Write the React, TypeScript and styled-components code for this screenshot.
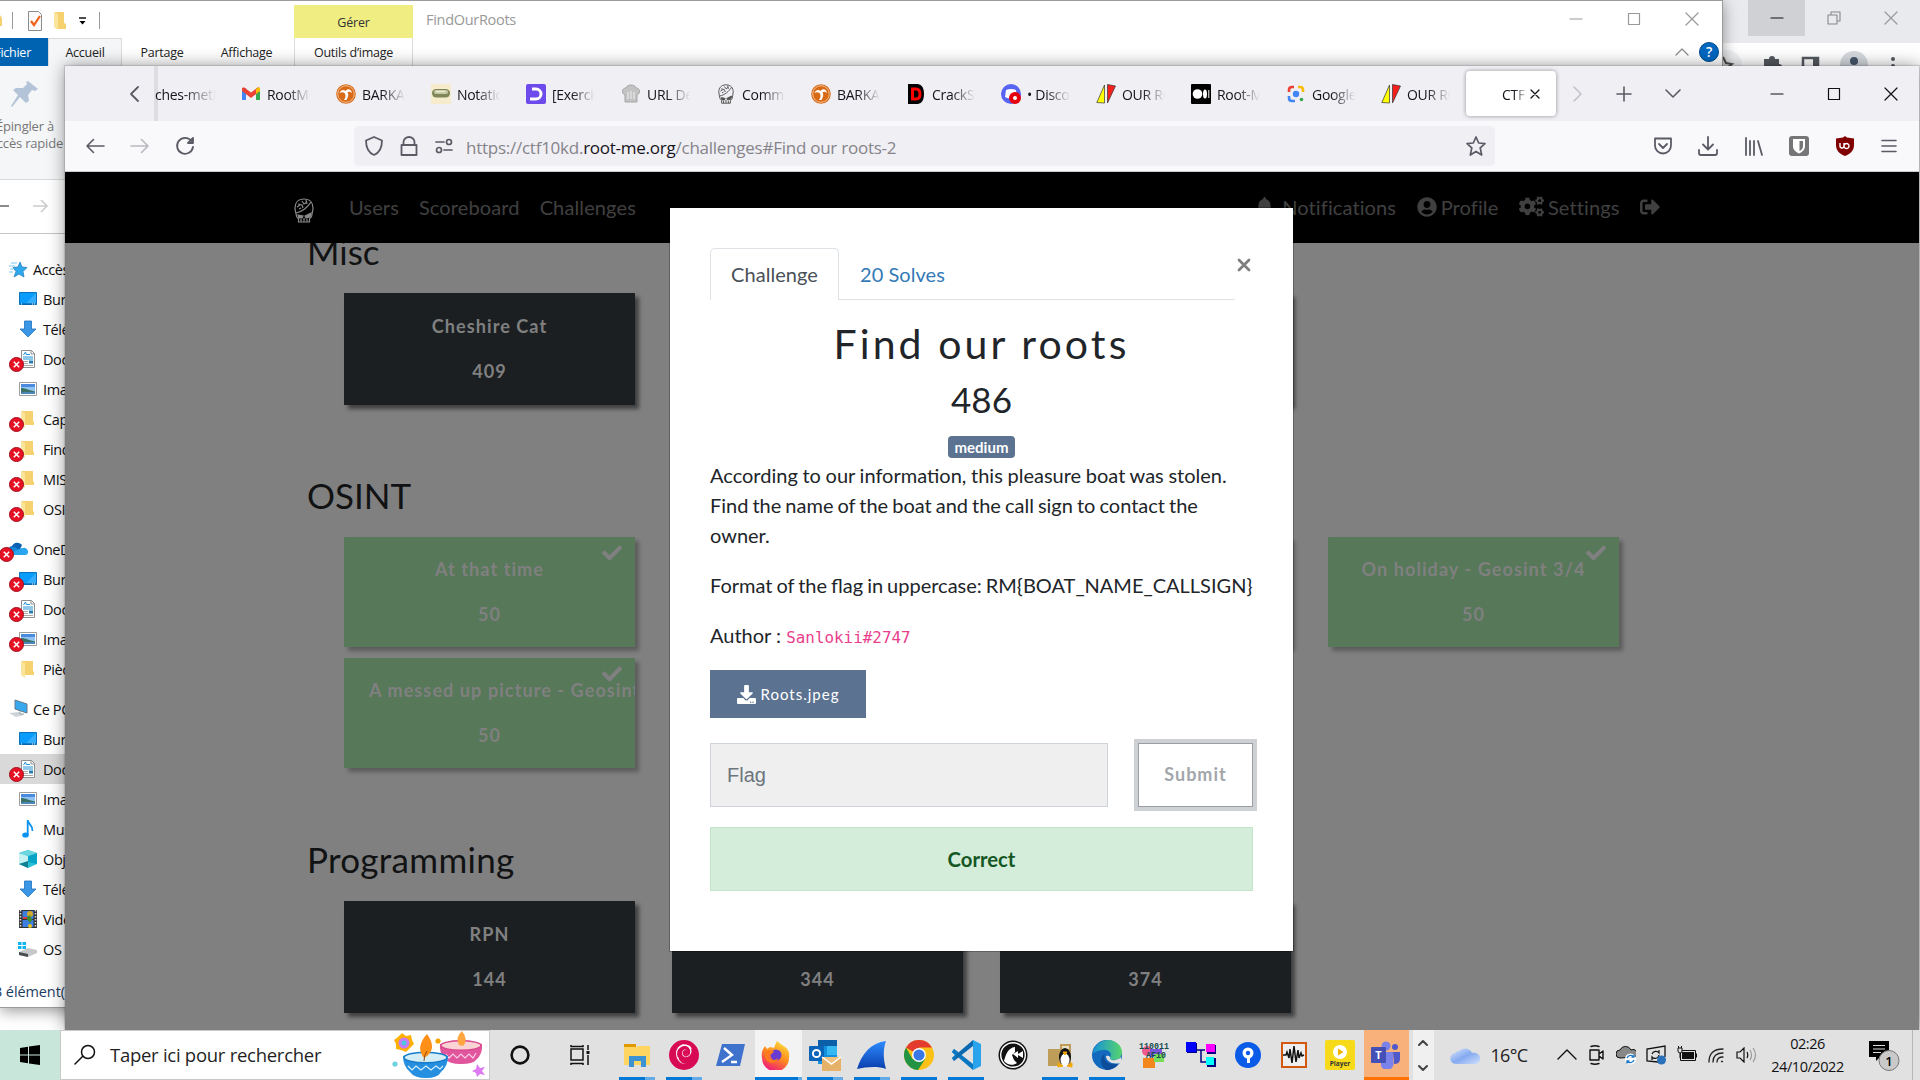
import React from "react";
import styled, { createGlobalStyle } from "styled-components";
import { FaBell, FaUserCircle, FaCogs, FaSignOutAlt, FaCheck, FaDownload } from "react-icons/fa";
import { SiDebian } from "react-icons/si";

const ui = `"Open Sans", "Noto Sans", sans-serif`;

const Global = createGlobalStyle`
  * { box-sizing: border-box; }
  body { margin: 0; overflow: hidden; background: #fff; }
  svg { display: block; flex: none; }
`;

const Desktop = styled.div`
  position: relative;
  width: 1920px;
  height: 1080px;
  overflow: hidden;
  background: #fff;
  font-family: ${ui};
  white-space: nowrap;
`;

/* ---------- browser window in the background ---------- */
const ChromeWindow = styled.div`
  position: absolute;
  inset: 0;
  background: #fff;
`;
const ChromeTitle = styled.div`
  height: 43px;
  background: #e8eaed;
  display: flex;
  justify-content: flex-end;
  align-items: flex-start;
  padding-right: 1px;
`;
const ChromeButton = styled.div<{ $active?: boolean }>`
  width: 57px;
  height: 36px;
  display: flex;
  align-items: center;
  justify-content: center;
  background: ${(p) => (p.$active ? "#d0d1d4" : "transparent")};
`;
const ChromeTools = styled.div`
  display: flex;
  justify-content: flex-end;
  align-items: center;
  gap: 19px;
  height: 40px;
  padding-right: 21px;
`;

/* ---------- file explorer ---------- */
const Explorer = styled.div`
  position: absolute;
  left: 0;
  top: 0;
  width: 1723px;
  height: 1008px;
  background: #fff;
  border: solid #9b9b9b;
  border-width: 1px 1px 1px 0;
  box-shadow: 0 3px 14px rgba(0, 0, 0, 0.4);
`;
const ExplorerTitle = styled.div`
  height: 37px;
  display: flex;
  align-items: flex-start;
`;
const QuickBar = styled.div`
  width: 294px;
  height: 30px;
  margin-top: 4px;
  display: flex;
  align-items: center;
`;
const ContextTab = styled.div`
  width: 119px;
  height: 33px;
  margin-top: 4px;
  padding-top: 2px;
  background: #f0ee82;
  display: flex;
  align-items: center;
  justify-content: center;
  font-size: 12.5px;
  letter-spacing: -0.2px;
  color: #333;
`;
const WindowName = styled.div`
  margin: 9px 0 0 13px;
  font-size: 14.5px;
  letter-spacing: -0.3px;
  color: #999;
  flex: 1;
`;
const ExplorerControls = styled.div`
  display: flex;
  gap: 44px;
  padding: 11px 23px 0 0;
`;
const RibbonTabs = styled.div`
  height: 28px;
  display: flex;
  font-size: 12.5px;
  letter-spacing: -0.25px;
  color: #222;
`;
const RibbonTab = styled.div<{ $w: number; $kind?: "file" | "open" | "tool" }>`
  width: ${(p) => p.$w}px;
  display: flex;
  align-items: center;
  justify-content: center;
  ${(p) => p.$kind === "file" && "background:#0063b1;color:#fff;justify-content:flex-end;padding-right:17px;"}
  ${(p) => p.$kind === "open" && "background:#f5f6f7;border:1px solid #dadbdc;border-bottom:0;"}
  ${(p) => p.$kind === "tool" && "border:solid #dadbdc;border-width:0 1px;margin-left:3px;"}
`;
const RibbonEnd = styled.div`
  flex: 1;
  display: flex;
  justify-content: flex-end;
  align-items: center;
  gap: 10px;
  padding-right: 3px;
`;
const Help = styled.div`
  width: 20px;
  height: 20px;
  border-radius: 50%;
  background: #0067c0;
  border: 1px solid #00488c;
  color: #fff;
  font-weight: 600;
  font-size: 14px;
  line-height: 18px;
  text-align: center;
`;
const Ribbon = styled.div`
  height: 114px;
  background: #f5f6f7;
  border-bottom: 1px solid #d8d9da;
  padding-top: 14px;
`;
const PinLabel = styled.div`
  width: 63px;
  display: flex;
  flex-direction: column;
  align-items: flex-end;
  font-size: 13px;
  letter-spacing: -0.2px;
  line-height: 17px;
  color: #777;
  padding-top: 10px;
  span:first-child { padding-right: 9px; }
`;
const AddressRow = styled.div`
  height: 54px;
  border-bottom: 1px solid #c4c4c4;
  display: flex;
  align-items: center;
`;
const Tree = styled.div`
  padding-top: 20px;
  display: flex;
  flex-direction: column;
  gap: 10px;
`;
const TreeRow = styled.div<{ $root?: boolean; $on?: boolean }>`
  height: 30px;
  display: flex;
  align-items: center;
  gap: 5px;
  padding-left: ${(p) => (p.$root ? 8 : 18)}px;
  background: ${(p) => (p.$on ? "#d9d9d9" : "transparent")};
  font-size: 14.5px;
  letter-spacing: -0.4px;
  color: #111;
  width: 100px;
`;
const TreeIcon = styled.div`
  position: relative;
  width: 20px;
  height: 20px;
`;
const ErrorDot = styled.svg`
  position: absolute;
  left: -9px;
  top: 8px;
`;
const Status = styled.div`
  margin-top: 18px;
  margin-left: -6px;
  font-size: 14.5px;
  letter-spacing: -0.1px;
  color: #1e3c5f;
`;

/* ---------- firefox ---------- */
const Firefox = styled.div`
  position: absolute;
  left: 65px;
  top: 66px;
  width: 1854px;
  height: 964px;
  background: #808080;
  box-shadow: 0 0 16px rgba(0, 0, 0, 0.42), 0 0 1px 1px rgba(0, 0, 0, 0.12);
  display: flex;
  flex-direction: column;
`;
const TabStrip = styled.div`
  height: 55px;
  background: #f0eff4;
  display: flex;
  align-items: center;
`;
const ScrollLeft = styled.div`
  width: 89px;
  padding-left: 60px;
`;
const CutTab = styled.div`
  width: 76px;
  height: 55px;
  display: flex;
  align-items: center;
  border-left: 4px solid #dedde2;
`;
const Tab = styled.div`
  width: 95px;
  display: flex;
  align-items: center;
  gap: 6px;
  padding-left: 11px;
`;
const Favicon = styled.div`
  width: 20px;
  display: flex;
  justify-content: center;
`;
const TabText = styled.div<{ $w?: number; $pull?: boolean }>`
  width: ${(p) => p.$w ?? 44}px;
  padding-top: 1px;
  overflow: hidden;
  font-size: 14px;
  letter-spacing: -0.3px;
  color: #15141a;
  margin-left: ${(p) => (p.$pull ? -3 : 0)}px;
  mask-image: linear-gradient(to right, #000 45%, transparent 98%);
`;
const ActiveTab = styled.div`
  width: 90px;
  height: 45px;
  margin-left: 1px;
  border-radius: 4px;
  background: #fff;
  box-shadow: 0 0 4px rgba(0, 0, 0, 0.4);
  display: flex;
  align-items: center;
  padding-left: 36px;
  gap: 2px;
`;
const StripTools = styled.div`
  flex: 1;
  display: flex;
  align-items: center;
  justify-content: space-between;
  padding: 0 21px 0 17px;
`;
const ToolGroup = styled.div<{ $gap: number }>`
  display: flex;
  align-items: center;
  gap: ${(p) => p.$gap}px;
`;
const ToolBar = styled.div`
  height: 51px;
  background: #f9f9fb;
  border-bottom: 1px solid #cccccf;
  display: flex;
  align-items: center;
  padding: 0 21px 0 20px;
`;
const UrlBar = styled.div`
  width: 1141px;
  height: 40px;
  margin-left: 159px;
  border-radius: 5px;
  background: #f0eff4;
  display: flex;
  align-items: center;
  padding: 0 9px 0 10px;
`;
const Url = styled.div`
  flex: 1;
  margin-left: 12px;
  padding-top: 2px;
  font-size: 17px;
  letter-spacing: -0.25px;
  color: #85848a;
  b { font-weight: 400; color: #15141a; }
`;
const RightTools = styled.div`
  flex: 1;
  display: flex;
  align-items: center;
  justify-content: flex-end;
  gap: 25.5px;
`;
const Page = styled.div`
  position: relative;
  flex: 1;
  overflow: hidden;
  font-family: Lato, sans-serif;
`;
const SiteNav = styled.div`
  height: 71px;
  background: #000;
  color: #404040;
  font-size: 20px;
  letter-spacing: 0.12px;
  display: flex;
  align-items: center;
  padding: 0 259px 2px 229px;
`;
const NavLinks = styled.div<{ $gap: number }>`
  display: flex;
  align-items: center;
  gap: ${(p) => p.$gap}px;
`;
const NavItem = styled.div<{ $gap?: number }>`
  display: flex;
  align-items: center;
  gap: ${(p) => p.$gap ?? 4}px;
`;
const LogoBox = styled.div`
  width: 35px;
  padding-top: 7px;
`;
const Spacer = styled.div`
  flex: 1;
`;
const Scroll = styled.div`
  height: 787px;
  overflow: hidden;
  padding-left: 242px;
  display: flex;
  flex-direction: column;
`;
const Section = styled.section<{ $top: number }>`
  flex: none;
  margin-top: ${(p) => p.$top}px;
`;
const SectionTitle = styled.h3<{ $ls?: number }>`
  margin: 0 0 21px;
  font-weight: 400;
  font-size: 35px;
  line-height: 42px;
  letter-spacing: ${(p) => p.$ls ?? 0}px;
  color: #111213;
`;
const CardGrid = styled.div`
  padding-left: 37px;
  display: grid;
  grid-template-columns: repeat(4, 291px);
  gap: 11px 37px;
`;
const Card = styled.div<{ $solved?: boolean }>`
  position: relative;
  height: ${(p) => (p.$solved ? 110 : 112)}px;
  background: ${(p) => (p.$solved ? "#577859" : "#1b1f22")};
  box-shadow: 4px 4px 4px rgba(0, 0, 0, ${(p) => (p.$solved ? 0.28 : 0.5)});
  color: #808080;
  font-weight: 700;
  font-size: 18.1px;
  letter-spacing: 1.05px;
  line-height: 45px;
  padding: ${(p) => (p.$solved ? 10 : 11)}px 25px 0;
  display: flex;
  flex-direction: column;
  align-items: center;
`;
const CardName = styled.div<{ $clip?: boolean }>`
  align-self: ${(p) => (p.$clip ? "flex-start" : "center")};
  width: ${(p) => (p.$clip ? "266px" : "auto")};
  overflow: ${(p) => (p.$clip ? "hidden" : "visible")};
`;
const Solved = styled.div`
  position: absolute;
  right: 13px;
  top: 6px;
  font-size: 20px;
`;

/* ---------- challenge dialog ---------- */
const Modal = styled.div`
  position: absolute;
  left: 605px;
  top: 36px;
  width: 623px;
  height: 743px;
  background: #fff;
  box-shadow: 0 0 0 1px rgba(0, 0, 0, 0.25);
  padding: 40px;
  color: #212529;
  font-size: 20px;
  line-height: 30px;
  display: flex;
  flex-direction: column;
`;
const ModalHead = styled.div`
  display: flex;
`;
const ModalTabs = styled.div`
  width: 525px;
  height: 52px;
  border-bottom: 1px solid #dee2e6;
  display: flex;
`;
const ModalTab = styled.div<{ $on?: boolean }>`
  height: 52px;
  padding: 10px 20px 0;
  border: 1px solid ${(p) => (p.$on ? "#dee2e6" : "transparent")};
  border-bottom: 0;
  border-radius: 5px 5px 0 0;
  background: ${(p) => (p.$on ? "#fff" : "transparent")};
  color: ${(p) => (p.$on ? "#495057" : "#337ab7")};
  letter-spacing: 0.06px;
`;
const Close = styled.div`
  padding: 10px 0 0 2px;
`;
const Title = styled.h2`
  margin: 19px 0 0;
  text-align: center;
  font-weight: 400;
  font-size: 41px;
  line-height: 50px;
  letter-spacing: 3.1px;
`;
const Score = styled.div`
  margin-top: 9px;
  text-align: center;
  font-size: 35px;
  line-height: 42px;
`;
const Badge = styled.div`
  align-self: center;
  margin-top: 16px;
  height: 22px;
  width: 67px;
  border-radius: 4px;
  background: #5b7290;
  color: #fff;
  font-weight: 700;
  font-size: 15px;
  line-height: 22px;
  text-align: center;
`;
const Description = styled.div`
  padding-top: 2px;
`;
const Para = styled.div`
  margin: 0 0 20px;
  code {
    font-family: "DejaVu Sans Mono", monospace;
    font-size: 15.9px;
    color: #e83e8c;
  }
`;
const Line = styled.div<{ $ws: number }>`
  word-spacing: ${(p) => p.$ws}px;
`;
const FileButton = styled.div`
  width: 156px;
  height: 48px;
  margin-top: -3px;
  background: #5b7290;
  color: #fff;
  font-size: 15px;
  letter-spacing: 1px;
  display: flex;
  align-items: center;
  justify-content: center;
  gap: 5px;
`;
const AnswerRow = styled.div`
  display: flex;
  justify-content: space-between;
  margin-top: 25px;
`;
const FlagInput = styled.div`
  width: 398px;
  height: 64px;
  background: #efefef;
  border: 1px solid #ced4da;
  padding-left: 16px;
  font: 20px/62px "Liberation Sans", Arial, sans-serif;
  color: #6c757d;
`;
const Submit = styled.div`
  width: 115px;
  height: 64px;
  border: 1px solid #9b9fa5;
  box-shadow: 0 0 0 4px #ced1d4;
  color: #a3a6aa;
  font-weight: 700;
  font-size: 18px;
  letter-spacing: 1px;
  line-height: 60px;
  text-align: center;
`;
const Alert = styled.div`
  margin-top: 20px;
  height: 64px;
  background: #d4edda;
  border: 1px solid #c3e6cb;
  color: #155724;
  font-weight: 700;
  font-size: 20.3px;
  line-height: 62px;
  text-align: center;
`;

/* ---------- taskbar ---------- */
const TaskBar = styled.div`
  position: absolute;
  left: 0;
  top: 1030px;
  width: 1920px;
  height: 50px;
  background: #e1e1e1;
  display: flex;
`;
const Start = styled.div`
  width: 60px;
  background: #c8e6da;
  display: flex;
  align-items: center;
  justify-content: center;
`;
const Search = styled.div`
  width: 430px;
  border: 1px solid #c9c9c9;
  background: #fff;
  display: flex;
  align-items: center;
  padding: 0 3px 0 13px;
  font-size: 18.5px;
  letter-spacing: -0.27px;
  color: #1f1f1f;
`;
const SearchText = styled.div`
  flex: 1;
  margin-left: 14px;
  padding-bottom: 1px;
`;
const Slot = styled.div<{ $w?: number; $bg?: string; $line?: string; $shift?: number }>`
  width: ${(p) => p.$w ?? 47}px;
  height: 50px;
  flex: none;
  display: flex;
  align-items: center;
  justify-content: center;
  padding-right: ${(p) => p.$shift ?? 0}px;
  background: ${(p) => (p.$line ? `${p.$line} bottom center no-repeat,` : "")} ${(p) => p.$bg ?? "transparent"};
  background-size: ${(p) => (p.$bg ? "100% 3px" : "36px 3px")};
`;
const Pager = styled.div`
  width: 21px;
  margin-left: 4px;
  background: #f0f0f0;
  display: flex;
  flex-direction: column;
  justify-content: space-around;
  align-items: center;
`;
const Weather = styled.div`
  display: flex;
  align-items: center;
  gap: 11px;
  margin-left: 16px;
  width: 107px;
  font-size: 18px;
  letter-spacing: -0.7px;
  color: #222;
`;
const Tray = styled.div`
  display: flex;
  align-items: center;
  gap: 10.5px;
  width: 200px;
`;
const Clock = styled.div`
  width: 102px;
  display: flex;
  flex-direction: column;
  align-items: center;
  padding-top: 2px;
  font-size: 14.5px;
  letter-spacing: -0.45px;
  line-height: 23px;
  color: #111;
`;
const Notice = styled.div`
  display: flex;
  align-items: center;
  width: 54px;
  padding: 0 0 0 10px;
  border-right: 1px solid #b5b5b5;
`;

const line = (c: string) => `linear-gradient(${c}, ${c})`;
const blue = line("#0078d7");
const stacked = "linear-gradient(to right, #0078d7 72%, #63abe6 72%)";

type S = { size?: number; color?: string };

const Stroke = ({ d, w = 20, h = 20, c = "#5b5b66", sw = 1.6, o = 1 }: { d: string; w?: number; h?: number; c?: string; sw?: number; o?: number }) => (
  <svg width={w} height={h} viewBox={`0 0 ${w} ${h}`} fill="none" stroke={c} strokeWidth={sw} strokeLinecap="round" strokeLinejoin="round" opacity={o}>
    <path d={d} />
  </svg>
);

const Min = ({ color = "#111" }: S) => <Stroke w={14} h={14} c={color} sw={1.2} d="M1 7H13" />;
const Max = ({ color = "#111" }: S) => <Stroke w={14} h={14} c={color} sw={1.2} d="M1.500 1.500h11v11h-11z" />;
const X = ({ color = "#111" }: S) => <Stroke w={14} h={14} c={color} sw={1.2} d="M1 1L13 13M13 1L1 13" />;

/* explorer tree icons */
const kinds: Record<string, React.ReactNode> = {
  star: (
    <svg width="20" height="20" viewBox="0 0 20 20">
      <path d="M12 3l2 5 5 .5-4 4 1 5.500-5-3-5 3 2-5.500-3-4 5-.5z" fill="#2fa8ee" stroke="#1674b8" strokeWidth=".7" />
      <path d="M3 4h6M1 7h6M2 10h3M1 13h4" stroke="#5db9ee" strokeWidth=".8" />
    </svg>
  ),
  desk: (
    <svg width="20" height="20" viewBox="0 0 20 20">
      <path d="M1.500 3.500h17v12h-17z" fill="#0a9cfc" stroke="#0873ba" />
      <path d="M18 4V14.500H8z" fill="#34aefd" />
      <path d="M2 15h16" stroke="#075a96" />
      <path d="M3 15h1M14 15h1M16 15h1" stroke="#fff" />
    </svg>
  ),
  down: (
    <svg width="20" height="20" viewBox="0 0 20 20">
      <path d="M6.500 2h7v8H18l-8 8-8-8h4.500z" fill="#3b97e6" stroke="#1f72c0" strokeWidth=".8" />
    </svg>
  ),
  doc: (
    <svg width="20" height="20" viewBox="0 0 20 20">
      <path d="M3.500 1.500h10l3 3v14h-13z" fill="#fff" stroke="#8d8f92" />
      <path d="M13 1.500v3.500h3.500" fill="none" stroke="#8d8f92" />
      <path d="M5.500 6l2-3 1 3M9 5.500h3M5 8h10M5 10h10" stroke="#2193d6" fill="none" />
      <path d="M5 12.500h5M5 14.500h5M5 16.500h10" stroke="#a9a9a9" />
      <path d="M11 11.500h4v3h-4z" fill="#2a7fae" />
    </svg>
  ),
  img: (
    <svg width="20" height="20" viewBox="0 0 20 20">
      <path d="M1.500 3.500h17v13h-17z" fill="#fff" stroke="#9a9c9e" />
      <path d="M3 5h14v10H3z" fill="#8ec4ef" />
      <path d="M3 5h14v3H3z" fill="#4a8be0" />
      <path d="M3 9c5 0 8 2.500 14 3.500V15H3z" fill="#3c6f66" />
      <path d="M3 13.500c5-1 9 0 14-.7V15H3z" fill="#4b87b9" />
    </svg>
  ),
  folder: (
    <svg width="20" height="20" viewBox="0 0 20 20">
      <path d="M4 2h11v10l1 1v3H5z" fill="#f5d170" />
      <path d="M3 2l4 2v15l-4-3z" fill="#fbe49b" />
    </svg>
  ),
  cloud: (
    <svg width="20" height="20" viewBox="0 0 20 20">
      <path d="M1 14a4.500 4.500 0 013-7 6 6 0 0110-1l-4 9z" fill="#0b62b5" />
      <path d="M2 15a4 4 0 013-7c4 0 7 4 9 8H4z" fill="#1387dc" />
      <path d="M5 16a3 3 0 012-4c3-1 5-3 8-3a4 4 0 015 4 3 3 0 01-3 3z" fill="#28a5ee" />
    </svg>
  ),
  pc: (
    <svg width="20" height="20" viewBox="0 0 20 20">
      <path d="M7 1l12 4v9L7 10z" fill="#38a8ee" stroke="#66798a" />
      <path d="M1 14l10-1 5 3-8 2z" fill="#cdd3d8" />
      <path d="M12 12v3h4" stroke="#9aa" fill="none" />
    </svg>
  ),
  music: (
    <svg width="20" height="20" viewBox="0 0 20 20">
      <ellipse cx="7.500" cy="16" rx="3.300" ry="2.600" fill="#0b93f0" />
      <path d="M9.700 1v15M10 2c1 4 5 4 4.500 10" stroke="#0b93f0" strokeWidth="1.800" fill="none" />
    </svg>
  ),
  cube: (
    <svg width="20" height="20" viewBox="0 0 20 20">
      <path d="M10 1l9 3v11l-9 4-9-4V4z" fill="#2cc0d4" />
      <path d="M1 4l9 3v6l-9 2z" fill="#c5f1f3" />
      <path d="M10 7l9-3v11l-9-2z" fill="#07a4c8" />
      <path d="M10 1l9 3-9 3-9-3z" fill="#69d6e0" />
      <path d="M1 15l9-3v7z" fill="#128093" />
    </svg>
  ),
  video: (
    <svg width="20" height="20" viewBox="0 0 20 20">
      <path d="M1 1h18v18H1z" fill="#333" />
      <path d="M4.500 2h11v8h-11zM4.500 11h11v7h-11z" fill="#3d7fe0" />
      <path d="M2.500 1v18M17.500 1v18" stroke="#ddd" strokeWidth="1.500" strokeDasharray="1.500 1.500" />
      <circle cx="12" cy="5" r="3" fill="#d3a92a" />
      <path d="M8 9l4-3 2 5-2 3z" fill="#3d8a2f" />
      <path d="M5 8h4v2H5z" fill="#d33b3b" />
      <circle cx="12" cy="17" r="2" fill="#e6c21c" />
    </svg>
  ),
  disk: (
    <svg width="20" height="20" viewBox="0 0 20 20">
      <path d="M0 3h3.500v3H0zM4.500 3H8v3H4.500zM0 7h3.500v3H0zM4.500 7H8v3H4.500z" fill="#0cb4f0" />
      <path d="M1 13l9-4 9 2v3l-9 4-9-2z" fill="#c6c8ca" />
      <path d="M1 13l9 2v3l-9-2z" fill="#4a4d50" />
    </svg>
  ),
};

type Row = [string, string, boolean?, boolean?];
const tree: Row[][] = [
  [["star", "Accès rapide"], ["desk", "Bureau"], ["down", "Téléchargements"], ["doc", "Documents", true], ["img", "Images"], ["folder", "Captures", true], ["folder", "FindOurRoots", true], ["folder", "MISC", true], ["folder", "OSINT", true]],
  [["cloud", "OneDrive", true], ["desk", "Bureau", true], ["doc", "Documents", true], ["img", "Images", true], ["folder", "Pièces jointes"]],
  [["pc", "Ce PC"], ["desk", "Bureau"], ["doc", "Documents", true, true], ["img", "Images"], ["music", "Musique"], ["cube", "Objets 3D"], ["down", "Téléchargements"], ["video", "Vidéos"], ["disk", "OS (C:)"]],
];

const Skull = ({ size = 20, color = "#555" }: S) => (
  <svg width={size} height={size * 1.25} viewBox="0 0 20 25" fill="none" stroke={color} strokeWidth="1.200">
    <path d="M10 1C4 1 1 5 1 10c0 3 1 5 1.500 8 .3 2 2 1.500 2 3V24h11v-3c0-1.500 2-1 2.200-3C18 15 19 13 19 10c0-5-3-9-9-9z" />
    <path d="M2 15C8 14 14 9 17 4M4 6l4 1 1 3M8 3l2 3 3-2M5 11l2-1M12 2l1 4M3 9l3-2" />
    <path d="M4 17l5 1-1 2H5zM11 18l6-3-1 4-4 1z" fill={color} />
    <path d="M7 21v3M10 20v4M13 21v3" />
  </svg>
);
const Palm = () => (
  <svg width="20" height="20" viewBox="0 0 20 20">
    <circle cx="10" cy="10" r="9.800" fill="#d96a16" />
    <circle cx="10" cy="10" r="8.300" fill="none" stroke="#f4c79d" strokeWidth=".9" />
    <path d="M3.500 9c1-3 4-4 6-2 2-3 6-2 6.500 2-2-1.500-3-1.500-4.500-.5 1.500 2 .5 5-1 7.500H8c2-3 2-5 .5-7C7 8 5.500 8 3.500 9z" fill="#fff" />
  </svg>
);
const Sails = () => (
  <svg width="20" height="20" viewBox="0 0 20 20" stroke="#333" strokeWidth=".7">
    <path d="M8.500 1v18L.8 18.500z" fill="#ff0" />
    <path d="M11.500.5l8 1.500-8 17z" fill="#f5201b" />
  </svg>
);

const tabs: [React.ReactNode, string][] = [
  [<svg width="20" height="20" viewBox="0 0 20 20"><path d="M1 4h4v12H1z" fill="#4285f4" /><path d="M15 4h4v12h-4z" fill="#34a853" /><path d="M1 4l2-.8 7 5.300 7-5.300L19 4v3l-9 7-9-7z" fill="#ea4335" /><path d="M15 5l2-1.800L19 4v3l-4 3z" fill="#fbbc04" /></svg>, "RootMe"],
  [<Palm />, "BARKAT"],
  [<svg width="20" height="20" viewBox="0 0 20 20"><path d="M0 0h20v20H0z" fill="#f6eccb" /><rect x="1" y="5" width="18" height="8.500" rx="4.200" fill="#7f8658" /><rect x="3" y="6" width="14" height="4" rx="2" fill="#c9cba5" /><path d="M5 7.500h9" stroke="#eef0da" /></svg>, "Notation"],
  [<svg width="20" height="20" viewBox="0 0 20 20"><rect width="20" height="20" rx="2" fill="#6d4aeb" /><path d="M6 5h4a5 5 0 010 10H4" stroke="#fff" strokeWidth="3" fill="none" /></svg>, "[Exercice"],
  [<svg width="20" height="20" viewBox="0 0 20 20"><path d="M4 18V11C0 9 1 4 5 4c1-4 9-4 10 0 4 0 5 5 1 7v7z" fill="#c3c3c3" stroke="#a5a5a5" /><path d="M7 8v7M10 7v8M13 8v7" stroke="#eee" /></svg>, "URL Dec"],
  [<Skull size={16} />, "Commen"],
  [<Palm />, "BARKAT"],
  [<svg width="20" height="20" viewBox="0 0 20 20"><path d="M2 0h10q6 1 6 10t-6 10H2z" fill="#000" /><path d="M6.500 5H10q4 0 4 5t-4 5H6.500z" fill="none" stroke="#f00" strokeWidth="3" /></svg>, "CrackSt"],
  [<svg width="20" height="20" viewBox="0 0 20 20"><circle cx="10" cy="10" r="10" fill="#5865f2" /><path d="M5 6q5-2 10 0l1 7q-6 3-12 0z" fill="#fff" /><circle cx="14" cy="14" r="6" fill="#e4000f" /><circle cx="14" cy="14" r="2" fill="#fff" /></svg>, "• Discord"],
  [<Sails />, "OUR RO"],
  [<svg width="20" height="20" viewBox="0 0 20 20"><rect width="20" height="20" rx="1" fill="#000" /><circle cx="6.500" cy="10" r="4.800" fill="#fff" /><ellipse cx="14" cy="10" rx="2" ry="4.500" fill="#fff" /><path d="M17.800 6v8" stroke="#fff" /></svg>, "Root-Me"],
  [<svg width="20" height="20" viewBox="0 0 20 20" fill="none" strokeWidth="2.600"><path d="M3 8V6q0-3 3-3h2" stroke="#ea4335" /><path d="M12 3h2q3 0 3 3v2" stroke="#fbbc04" /><path d="M3 12v2q0 3 3 3h3" stroke="#4285f4" /><circle cx="10" cy="10" r="3.200" fill="#4285f4" /><circle cx="15.500" cy="15.500" r="1.800" fill="#34a853" /></svg>, "Google"],
  [<Sails />, "OUR RO"],
];

const SolvedCard = ({ name, clip }: { name: string; clip?: boolean }) => (
  <Card $solved>
    <CardName $clip={clip}>{name}</CardName>
    <div>50</div>
    <Solved><FaCheck /></Solved>
  </Card>
);

const Diyas = () => (
  <svg width="94" height="48" viewBox="0 0 94 48">
    <path d="M6 6l4-4 4 3 5-1 1 5 2 4-4 4-4 4-5-2-5-1v-5l-2-4z" fill="#ffb000" />
    <circle cx="12" cy="12" r="5.500" fill="#c77bf2" /><circle cx="12" cy="12" r="2.500" fill="#4cc5dd" />
    <circle cx="46" cy="10" r="2.600" fill="#f7a400" />
    <circle cx="3" cy="33" r="2.600" fill="#6bd3e2" />
    <path d="M48 13q21-7 42 0 1 10-6 16-3 4-15 4-12 0-16-5-6-6-5-15z" fill="#e0559c" />
    <ellipse cx="69" cy="14.500" rx="20" ry="4.800" fill="#fbd3d4" stroke="#d9478f" strokeWidth="1.500" />
    <path d="M67 14q-4-8 3-14 7 9 1 15z" fill="#ffa640" />
    <path d="M54 23l3 4 4-4 4 4 4-4 4 4 4-4 4 4 3-5" stroke="#ffd0ea" fill="none" strokeWidth="1.200" />
    <path d="M11 25q22-7 45 0 0 10-7 16-3 6-15 6-12 0-16-6-7-6-7-16z" fill="#268fdf" />
    <ellipse cx="33.500" cy="26.500" rx="21.500" ry="5.200" fill="#d5eef5" stroke="#167dcc" strokeWidth="1.500" />
    <path d="M32 27q-9-11 3-24 10 14 0 22z" fill="#ff8f17" />
    <path d="M32 30q0-6 3-10" stroke="#8a4a10" fill="none" />
    <path d="M16 35l4 4 4-4 5 4 5-4 5 4 5-4 4 3 3-3" stroke="#d5f0ff" fill="none" strokeWidth="1.200" />
    <path d="M85 33l3 4 5-1-3 4 3 4-5-1-3 3-1-4-4-2 4-2z" fill="#de7bf2" />
  </svg>
);

const apps: { w?: number; bg?: string; l?: string; shift?: number; i: React.ReactNode }[] = [
  { l: stacked, i: <svg width="28" height="28" viewBox="0 0 28 28"><path d="M1 3h12v4H1z" fill="#e09a00" /><path d="M1 6h12l2-1h12v19H1z" fill="#ffd562" /><path d="M6 26V15h17v11h-5v-6h-7v6z" fill="#3d93d2" /></svg> },
  { l: stacked, i: <svg width="30" height="30" viewBox="0 0 30 30"><circle cx="15" cy="15" r="15" fill="#d70a53" /><g transform="translate(5 4)"><SiDebian size={20} color="#fff" /></g></svg> },
  { shift: 1, i: <svg width="29" height="24" viewBox="0 0 29 24"><path d="M6 1h23l-5 22H0z" fill="#3f72cd" /><path d="M8 5l8 7-10 7M15 19h6" stroke="#fff" strokeWidth="2.400" fill="none" /></svg> },
  { bg: "#f3f3f3", shift: 5, l: "linear-gradient(to right, #0078d7 91%, #63abe6 91%)", i: <svg width="30" height="30" viewBox="0 0 30 30"><defs><linearGradient id="ff" x1=".8" y1="0" x2=".3" y2="1"><stop offset="0" stopColor="#ffe03b" /><stop offset=".5" stopColor="#ff8a1f" /><stop offset="1" stopColor="#f0147e" /></linearGradient></defs><path d="M16 1c2 1 3 3 5 4 6 3 8 7 7 13a13.500 13.500 0 01-27 0C0 12 2 9 4 6l2 3 3-2c2 0 3 1 4 1 1-3 2-5 3-7z" fill="url(#ff)" /><circle cx="15" cy="15" r="5.500" fill="#6a3bd0" /><path d="M4 13c3-4 7-3 9-1-2 1-3 3-6 3 0 5 6 7 10 3-2 9-15 5-13-5z" fill="#ff7b1c" /></svg> },
  { l: stacked, i: <svg width="34" height="32" viewBox="0 0 34 32"><path d="M10 1h19v24H10z" fill="#1490df" /><path d="M10 1h19v6H10z" fill="#0a5fa8" /><path d="M19 7h10v9H19z" fill="#35b8f1" /><rect x="1" y="7" width="15" height="15" rx="1" fill="#0a64b8" /><circle cx="8.500" cy="14.500" r="3.600" fill="none" stroke="#fff" strokeWidth="2" /><path d="M14 18h19v14H14z" fill="#e6b269" /><path d="M14 18l9.500 7 9.500-7" stroke="#fff" strokeWidth="1.500" fill="#efc27f" /></svg> },
  { l: stacked, i: <svg width="30" height="28" viewBox="0 0 30 28"><defs><linearGradient id="ws" x2="0" y2="1"><stop stopColor="#2e8bff" /><stop offset="1" stopColor="#0b3fae" /></linearGradient></defs><path d="M0 28C5 12 14 2 29 0c-3 8-3 18 0 28-8-3-20-2-29 0z" fill="url(#ws)" /></svg> },
  { l: blue, i: <svg width="30" height="30" viewBox="0 0 30 30"><circle cx="15" cy="15" r="15" fill="#fbc116" /><path d="M15 15L2 7.500A15 15 0 0128 7.500H15z" fill="#e33b2e" /><path d="M2 7.500A15 15 0 0014 30l7.500-11.500L8.500 19z" fill="#229342" /><circle cx="15" cy="15" r="7" fill="#fff" /><circle cx="15" cy="15" r="5.600" fill="#3b78e7" /></svg> },
  { l: blue, i: <svg width="30" height="30" viewBox="0 0 30 30"><path d="M3 9L22 24V30L1 12z" fill="#0b77c2" /><path d="M3 21L22 6V0L1 18z" fill="#0a69b0" /><path d="M3 9l4 3-4 9-2-3 3-3-3-3z" fill="#0b77c2" /><path d="M22 0l8 4v22l-8 4z" fill="#29a3ec" /></svg> },
  { i: <svg width="30" height="30" viewBox="0 0 30 30"><circle cx="15" cy="15" r="14.500" fill="#111" /><circle cx="15" cy="15" r="12.300" fill="none" stroke="#fff" strokeWidth="1.400" /><path d="M6 21C8 14 10 8 17 7v5l-3 3 2 5 3 3c-4 3-10 2-13-2zM15 14l5-3v3l5-3v7l-5-3v3z" fill="#fff" /></svg> },
  { l: blue, i: <svg width="28" height="26" viewBox="0 0 28 26"><path d="M2 7h12V2h11v22H2z" fill="#bd9d58" /><path d="M16 4h7v3h-7z" fill="#e8e0c8" /><ellipse cx="19" cy="15" rx="6" ry="9" fill="#111" /><ellipse cx="19" cy="18" rx="4.500" ry="6.500" fill="#fff" /><path d="M17 10h4l-2 3zM12 21l5 3-5 1zM26 21l-5 3 5 1z" fill="#f5a800" stroke="#f5a800" /></svg> },
  { l: blue, i: <svg width="30" height="30" viewBox="0 0 30 30"><defs><linearGradient id="ed" x2="1"><stop stopColor="#1791d8" /><stop offset="1" stopColor="#58d56b" /></linearGradient></defs><circle cx="15" cy="15" r="15" fill="#1269bd" /><path d="M1 13C3 3 11 0 16 0c8 0 14 6 14 12 0 5-4 8-8 8-3 0-4-1-4-2 3-5-2-9-7-8-5 0-8 3-10 3z" fill="url(#ed)" /><path d="M13 14c-3 5 2 12 13 10-3 4-7 6-12 6-7-6-6-14-1-16z" fill="#0d4c99" /><path d="M18 18c0 3 7 3 11-1v5l-1 1c-8 2-14-2-14-7 2-1 5 1 4 2z" fill="#e1e1e1" /></svg> },
  { i: <svg width="30" height="28" viewBox="0 0 30 28"><circle cx="8" cy="10" r="5" fill="#f0588e" /><path d="M11 8h12v8H11z" fill="#7a53df" /><path d="M4 17h12v10H4z" fill="#f3861c" /><path d="M15 13h10v8H15z" fill="#76dd5a" /><text x="0" y="8" fontFamily="Liberation Mono" fontWeight="700" fontSize="8.300" fill="#164c4c">110011</text><text x="7" y="17" fontFamily="Liberation Mono" fontWeight="700" fontSize="8.300" fill="#164c4c">AF10</text></svg> },
  { i: <svg width="30" height="26" viewBox="0 0 30 26"><path d="M11 8h8M15 8v12h5" stroke="#000080" fill="none" strokeWidth="1.500" /><path d="M1 1h10v10H1zM21 3h9v9h-9zM21 16h9v9h-9z" fill="#000080" /><path d="M0 0h10v10H0z" fill="#00f" /><path d="M20 2h9v8h-9z" fill="#f0f" /><path d="M20 15h8v8h-8z" fill="#0ff" /></svg> },
  { i: <svg width="26" height="26" viewBox="0 0 26 26"><circle cx="13" cy="13" r="13" fill="#0a5be8" /><circle cx="13" cy="11" r="5.500" fill="#fff" /><circle cx="13" cy="11" r="2.200" fill="#0a5be8" /><path d="M12 15h3v6h-3z" fill="#fff" /></svg> },
  { w: 46, shift: 2, i: <svg width="26" height="26" viewBox="0 0 26 26"><path d="M1 1h24v24H1z" fill="#eee" stroke="#d4570f" strokeWidth="2" /><path d="M2 13h3l1-3 2 6 1-9 2 14 2-17 2 16 2-12 1 8 2-5 1 3 2-1" stroke="#111" strokeWidth="1.500" fill="none" /></svg> },
  { w: 46, shift: 2, i: <svg width="30" height="30" viewBox="0 0 30 30"><rect width="30" height="30" rx="2" fill="#f7da19" /><circle cx="15" cy="12" r="7" fill="#fff" /><path d="M13 8.500v7l5.500-3.500z" fill="#f0b400" /><text x="15" y="26" textAnchor="middle" fontFamily="Open Sans" fontWeight="700" fontSize="6.500" fill="#333">Player</text></svg> },
  { w: 45, bg: "#f9b17c", l: line("#ff7200"), i: <svg width="30" height="28" viewBox="0 0 30 28"><circle cx="15" cy="5" r="4.500" fill="#7b83eb" /><circle cx="24" cy="6" r="3" fill="#5059c9" /><path d="M10 11h12v9a6 6 0 01-12 5z" fill="#7b83eb" /><path d="M22 11h7v7q0 5-6 5z" fill="#5059c9" /><rect y="6" width="15" height="16" rx="1" fill="#4450b5" /><text x="7.500" y="18" textAnchor="middle" fontFamily="Open Sans" fontWeight="700" fontSize="11" fill="#fff">T</text></svg> },
];

export default function App() {
  return (
    <Desktop>
      <Global />
      <ChromeWindow>
        <ChromeTitle>
          <ChromeButton $active><Min /></ChromeButton>
          <ChromeButton><Stroke w={14} h={14} c="#888" sw={1.1} d="M1 4h9v9H1zM4 4V1h9v9h-3" /></ChromeButton>
          <ChromeButton><X color="#999" /></ChromeButton>
        </ChromeTitle>
        <ChromeTools>
          <svg width="32" height="32" viewBox="0 0 32 32"><circle cx="16" cy="18" r="15" fill="#f1f3f4" /><path d="M12 10l3 6 6 1-5 4" fill="none" stroke="#555" strokeWidth="2" /></svg>
          <svg width="20" height="20" viewBox="0 0 20 20"><path d="M2 6h5a3 3 0 016 0h4v5a3 3 0 010 6v3H2z" fill="#555a60" /></svg>
          <svg width="20" height="20" viewBox="0 0 20 20"><path d="M2 5h15v14H2z" fill="none" stroke="#555a60" strokeWidth="2.500" /><path d="M12 4h6v16h-6z" fill="#555a60" /></svg>
          <svg width="28" height="28" viewBox="0 0 28 28"><circle cx="14" cy="16" r="14" fill="#d5d9de" /><circle cx="14" cy="12" r="4" fill="#46566a" /></svg>
          <svg width="12" height="20" viewBox="0 0 12 20" fill="#555a60"><circle cx="6" cy="6" r="2" /><circle cx="6" cy="13" r="2" /></svg>
        </ChromeTools>
      </ChromeWindow>

      <Explorer>
        <ExplorerTitle>
          <QuickBar>
            <svg width="110" height="24" viewBox="0 0 110 24">
              <path d="M0 7l2 3v8H0z" fill="#f5d170" />
              <path d="M12.500 4v17M99.500 4v17" stroke="#999" />
              <path d="M28.500 3.500h10l3 3v16h-13z" fill="#fafafa" stroke="#8c8c8c" />
              <path d="M31 13l3 4 6-9" stroke="#f0601a" strokeWidth="2.200" fill="none" />
              <path d="M55 4h9v11l2 1v5H56z" fill="#f5d170" /><path d="M54 4l4 2v16l-4-3z" fill="#fbe49b" />
              <path d="M79 10h7" stroke="#000" strokeWidth="1.400" /><path d="M79.500 13h6l-3 3.500z" fill="#000" />
            </svg>
          </QuickBar>
          <ContextTab>Gérer</ContextTab>
          <WindowName>FindOurRoots</WindowName>
          <ExplorerControls><Min color="#999" /><Max color="#999" /><X color="#999" /></ExplorerControls>
        </ExplorerTitle>
        <RibbonTabs>
          <RibbonTab $w={48} $kind="file">Fichier</RibbonTab>
          <RibbonTab $w={74} $kind="open">Accueil</RibbonTab>
          <RibbonTab $w={80}>Partage</RibbonTab>
          <RibbonTab $w={89}>Affichage</RibbonTab>
          <RibbonTab $w={119} $kind="tool">Outils d’image</RibbonTab>
          <RibbonEnd>
            <Stroke w={14} h={10} c="#888" sw={1.2} d="M1 8l6-6 6 6" />
            <Help>?</Help>
          </RibbonEnd>
        </RibbonTabs>
        <Ribbon>
          <svg width="40" height="28" viewBox="0 0 40 28"><path d="M28 1l10 8-3 2-3-1-4 5 1 6-3 2-6-6-8 10-1-1 7-11-5-5 3-2 7 0 4-4-1-2z" fill="#b4c4d8" /></svg>
          <PinLabel><span>Épingler à</span><span>l’Accès rapide</span></PinLabel>
        </Ribbon>
        <AddressRow>
          <svg width="60" height="14" viewBox="0 0 60 14" fill="none" strokeWidth="1.600"><path d="M-6 6H9M-1 0l-6 6 6 6" stroke="#666" /><path d="M33 6h14M41 0l6 6-6 6" stroke="#ccc" /></svg>
        </AddressRow>
        <Tree>
          {tree.map((group, g) => (
            <div key={g}>
              {group.map(([icon, label, err, on], i) => (
                <TreeRow key={i} $root={i === 0} $on={on}>
                  <TreeIcon>
                    {kinds[icon]}
                    {err && (
                      <ErrorDot width="15" height="15" viewBox="0 0 15 15">
                        <circle cx="7.500" cy="7.500" r="7" fill="#e81123" stroke="#a30d1c" />
                        <path d="M4.800 4.800l5.400 5.400M10.200 4.800l-5.400 5.400" stroke="#fff" strokeWidth="1.500" />
                      </ErrorDot>
                    )}
                  </TreeIcon>
                  {label}
                </TreeRow>
              ))}
            </div>
          ))}
        </Tree>
        <Status>3 élément(s)</Status>
      </Explorer>

      <Firefox>
        <TabStrip>
          <ScrollLeft><Stroke w={20} d="M13 3L6 10l7 7" sw={1.8} /></ScrollLeft>
          <CutTab><TabText $w={62} $pull>ches-meth</TabText></CutTab>
          {tabs.map(([icon, text], i) => (
            <Tab key={i}>
              <Favicon>{icon}</Favicon>
              <TabText>{text}</TabText>
            </Tab>
          ))}
          <ActiveTab>
            <TabText $w={26}>CTF1</TabText>
            <Stroke w={10} h={10} c="#15141a" sw={1.3} d="M1 1l8 8M9 1L1 9" />
          </ActiveTab>
          <StripTools>
            <ToolGroup $gap={33}>
              <Stroke w={10} h={20} d="M1 3l7 7-7 7" o={0.3} />
              <Stroke w={16} h={16} d="M8 1v14M1 8h14" />
              <Stroke w={16} h={16} d="M1 4l7 7 7-7" />
            </ToolGroup>
            <ToolGroup $gap={43}><Min /><Max /><X /></ToolGroup>
          </StripTools>
        </TabStrip>
        <ToolBar>
          <ToolGroup $gap={25}>
            <Stroke d="M19 10H2M8.500 3.500L2 10l6.500 6.500" />
            <Stroke d="M1 10h17M11.500 3.500L18 10l-6.500 6.500" o={0.4} />
            <Stroke d="M16.500 5A8 8 0 1018 11M18 2v5h-5z" sw={1.8} />
          </ToolGroup>
          <UrlBar>
            <ToolGroup $gap={15}>
              <Stroke d="M10 1l8 3.500C18 12 15 17 10 19 5 17 2 12 2 4.500z" sw={1.8} />
              <Stroke d="M4.500 9V6a5.500 5 0 0111 0v3M2.500 9h15v10h-15z" sw={1.8} />
              <Stroke d="M2 6h8M10 14h8M12.500 6a2.500 2.500 0 105 0 2.500 2.500 0 10-5 0M2.500 14a2.500 2.500 0 105 0 2.500 2.500 0 10-5 0" sw={1.7} />
            </ToolGroup>
            <Url>https://ctf10kd.<b>root-me.org</b>/challenges#Find our roots-2</Url>
            <Stroke d="M10 1l2.700 6 6.300.6-4.800 4.300L15.700 19 10 15.500 4.300 19l1.500-7.100L1 7.600 7.300 7z" sw={1.7} />
          </UrlBar>
          <RightTools>
            <Stroke d="M2 2.500h16v7a8 8 0 01-16 0zM6 8l4 4 4-4" sw={1.8} />
            <Stroke d="M10 1v12M5 8.500l5 5 5-5M1 14v3q0 2 2 2h14q2 0 2-2v-3" sw={1.8} />
            <Stroke d="M2 2v17M6 5v14M10 5v14M14 5l4 14" sw={1.8} />
            <svg width="20" height="20" viewBox="0 0 20 20"><rect width="20" height="20" rx="3" fill="#767676" /><path d="M4 3h12v7c0 4-3 6-6 7.500C7 16 4 14 4 10z" fill="#fff" /><path d="M10.500 5H14v5c0 2.500-1.500 4-3.500 5z" fill="#767676" /></svg>
            <svg width="20" height="20" viewBox="0 0 20 20"><path d="M10 0l2 1.500 7 1V9c0 6-4 9-9 11C5 18 1 15 1 9V2.500l7-1z" fill="#800000" /><path d="M5 7v3q0 2 2 2t2-2V7m0 3a2.500 2.500 0 105 0 2.500 2.500 0 10-5 0" stroke="#fff" strokeWidth="1.400" fill="none" /></svg>
            <Stroke w={18} d="M2 4.500h14M2 10h14M2 15.500h14" />
          </RightTools>
        </ToolBar>
        <Page>
          <SiteNav>
            <NavLinks $gap={20}>
              <LogoBox><Skull size={20} color="#8a8a8a" /></LogoBox>
              <span>Users</span><span>Scoreboard</span><span>Challenges</span>
            </NavLinks>
            <Spacer />
            <NavLinks $gap={20.5}>
              <NavItem $gap={8}><FaBell size={19} />Notifications</NavItem>
              <NavItem><FaUserCircle size={20} />Profile</NavItem>
              <NavItem><FaCogs size={25} />Settings</NavItem>
              <FaSignOutAlt size={20} />
            </NavLinks>
          </SiteNav>
          <Scroll>
            <Section $top={-13}>
              <SectionTitle>Misc</SectionTitle>
              <CardGrid>
                <Card><CardName>Cheshire Cat</CardName><div>409</div></Card>
                <Card /><Card />
              </CardGrid>
            </Section>
            <Section $top={69}>
              <SectionTitle>OSINT</SectionTitle>
              <CardGrid>
                <SolvedCard name="At that time" />
                <Card $solved />
                <Card $solved />
                <SolvedCard name="On holiday - Geosint 3/4" />
                <SolvedCard clip name="A messed up picture - Geosint 4/4" />
              </CardGrid>
            </Section>
            <Section $top={70}>
              <SectionTitle $ls={0.3}>Programming</SectionTitle>
              <CardGrid>
                {[["RPN", "144"], ["\u00a0", "344"], ["\u00a0", "374"]].map(([n, s]) => (
                  <Card key={s}><CardName>{n}</CardName><div>{s}</div></Card>
                ))}
              </CardGrid>
            </Section>
          </Scroll>
          <Modal>
            <ModalHead>
              <ModalTabs><ModalTab $on>Challenge</ModalTab><ModalTab>20 Solves</ModalTab></ModalTabs>
              <Close><Stroke w={14} h={14} c="#7f7f7f" sw={2.8} d="M2 2l10 10M12 2L2 12" /></Close>
            </ModalHead>
            <Title>Find our roots</Title>
            <Score>486</Score>
            <Badge>medium</Badge>
            <Description>
              <Para>
                <Line $ws={-0.45}>According to our information, this pleasure boat was stolen.</Line>
                <Line $ws={-1.1}>Find the name of the boat and the call sign to contact the</Line>
                <Line $ws={0}>owner.</Line>
              </Para>
              <Para><Line $ws={-1.15}>Format of the flag in uppercase: RM&#123;BOAT_NAME_CALLSIGN&#125;</Line></Para>
              <Para>Author : <code>Sanlokii#2747</code></Para>
            </Description>
            <FileButton><FaDownload size={19} />Roots.jpeg</FileButton>
            <AnswerRow><FlagInput>Flag</FlagInput><Submit>Submit</Submit></AnswerRow>
            <Alert>Correct</Alert>
          </Modal>
        </Page>
      </Firefox>

      <TaskBar>
        <Start><svg width="20" height="20" viewBox="0 0 20 20"><path d="M0 3l8-1.200v7.700H0zM9 1.600L20 0v9.500H9zM0 10.500h8v7.700L0 17zM9 10.500h11V20L9 18.400z" /></svg></Start>
        <Search>
          <Stroke w={22} h={22} c="#111" sw={1.5} d="M1 20l8-8M7.500 8a6.500 6.500 0 1013 0 6.500 6.500 0 10-13 0" />
          <SearchText>Taper ici pour rechercher</SearchText>
          <Diyas />
        </Search>
        <Slot $w={60}><svg width="20" height="20" viewBox="0 0 20 20"><circle cx="10" cy="10" r="8.400" fill="none" stroke="#111" strokeWidth="2.600" /></svg></Slot>
        <Slot $w={63.5} $shift={3}><svg width="22" height="22" viewBox="0 0 22 22" fill="none" stroke="#111" strokeWidth="1.500"><path d="M2 5h12v11H2zM2 1v1.500h12V1M2 21v-1.500h12V21M19 1v5M19 11v10" /><path d="M17.500 7h3v3h-3z" fill="#111" stroke="none" /></svg></Slot>
        {apps.map((a, i) => <Slot key={i} $w={a.w} $bg={a.bg} $line={a.l} $shift={a.shift}>{a.i}</Slot>)}
        <Pager>
          <Stroke w={10} h={8} c="#444" d="M1 6l4-4 4 4" sw={2} />
          <Stroke w={10} h={8} c="#444" d="M1 2l4 4 4-4" sw={2} />
        </Pager>
        <Weather>
          <svg width="30" height="20" viewBox="0 0 30 20"><defs><linearGradient id="cl" x2="1" y2="1"><stop stopColor="#dbe9ff" /><stop offset=".5" stopColor="#85aaf0" /><stop offset="1" stopColor="#cfe0fb" /></linearGradient></defs><path d="M6 19a5.500 5.500 0 01-.5-11C6 6 8 6 9 6a8 8 0 0113 2c5-1 8 2 8 5.500S28 19 25 19z" fill="url(#cl)" /></svg>
          16°C
        </Weather>
        <Tray>
          <Stroke w={20} c="#111" sw={1.4} d="M1 14l9-9 9 9" />
          <Stroke w={18} c="#111" sw={1.4} d="M3 5h9v10H3zM12 9l4-3v8l-4-3M4 1.500q4-1.500 8 0M4 18.500q4 1.500 8 0" />
          <svg width="20" height="20" viewBox="0 0 20 20"><path d="M4 13a4 4 0 010-8 6 6 0 0111 0 4 4 0 014 7z" fill="#888" stroke="#111" /><circle cx="14.500" cy="14" r="5.500" fill="#fff" /><path d="M11 13a4 4 0 017-1M18 15a4 4 0 01-7 1M18 9.500V12h-2.500M11 18.500V16h2.500" stroke="#1d77c9" strokeWidth="1.300" fill="none" /></svg>
          <svg width="20" height="20" viewBox="0 0 20 20"><path d="M12 17L1 16V4L19 1v11" fill="none" stroke="#111" strokeWidth="1.300" /><path d="M6 9a4 4 0 017-1V5M13 10a4 4 0 01-7 2v3" stroke="#111" fill="none" strokeWidth="1.200" /><circle cx="15.500" cy="15" r="4.500" fill="#2971bb" /></svg>
          <svg width="20" height="20" viewBox="0 0 20 20"><path d="M3.500 5.500h15v10h-15z" fill="none" stroke="#111" /><path d="M5 7h12v7H5z" fill="#111" /><path d="M19 8.500h1v4h-1z" fill="#111" /><path d="M1 3v3q0 2 2 2t2-2V3z" fill="#e1e1e1" /><path d="M1 3h4v3q0 2-2 2T1 6zM1.500 1v2M4.500 1v2M3 8v5" stroke="#111" fill="none" /></svg>
          <Stroke w={18} h={18} c="#222" sw={1.3} d="M2 16Q2 3 16 3M6 16q0-9 10-9M10 16q0-5 6-5M14.500 15.500h1" />
          <svg width="22" height="16" viewBox="0 0 22 16" fill="none" stroke="#111" strokeWidth="1.200"><path d="M1 5h3l4-4v14l-4-4H1zM11 5q1.500 3 0 6" /><path d="M14 3q3 5 0 10M17 1q5 7 0 14" stroke="#999" /></svg>
        </Tray>
        <Clock><span>02:26</span><span>24/10/2022</span></Clock>
        <Notice>
          <svg width="31" height="32" viewBox="0 0 31 32"><path d="M0 2h20v16h-9l-4 4v-4H0z" fill="#000" /><path d="M4 6.500h12M4 10h12M4 13.500h8" stroke="#ddd" strokeWidth="1.200" /><circle cx="20" cy="21.500" r="10" fill="#c9c9c9" stroke="#777" /><text x="20" y="26.500" textAnchor="middle" fontFamily="Open Sans" fontSize="13" fontWeight="600">1</text></svg>
        </Notice>
      </TaskBar>
    </Desktop>
  );
}
